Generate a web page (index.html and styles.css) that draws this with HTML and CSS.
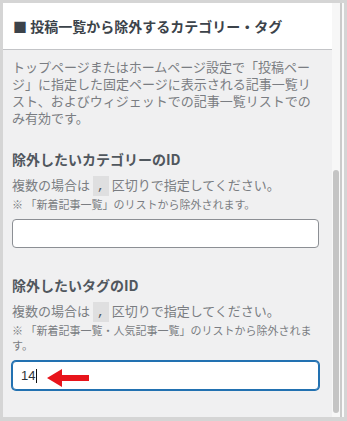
FILE: index.html
```html
<!DOCTYPE html>
<html lang="ja">
<head>
  <meta charset="UTF-8" />
  <meta name="viewport" content="width=device-width, initial-scale=1.0"/>
  <title>投稿一覧から除外するカテゴリー・タグ</title>
  <link rel="stylesheet" href="styles.css">
</head>
<body>
  <div class="frame">
    <div class="panel">
      <div class="panel-head">
        <h3>■ 投稿一覧から除外するカテゴリー・タグ</h3>
      </div>

      <div class="panel-body">
        <p class="intro">トップページまたはホームページ設定で「投稿ページ」に指定した固定ページに表示される記事一覧リスト、およびウィジェットでの記事一覧リストでのみ有効です。</p>

        <div class="field">
          <label class="label" for="ex-cat">除外したいカテゴリーのID</label>
          <p class="desc">複数の場合は <code>,</code> 区切りで指定してください。</p>
          <p class="note">※ 「新着記事一覧」のリストから除外されます。</p>
          <input type="text" id="ex-cat" class="input">
        </div>

        <div class="field">
          <label class="label">除外したいタグのID</label>
          <p class="desc">複数の場合は <code>,</code> 区切りで指定してください。</p>
          <p class="note">※ 「新着記事一覧・人気記事一覧」のリストから除外されます。</p>
          <div class="input is-focus">
            <span class="value">14</span><span class="caret"></span>
            <!-- annotation arrow -->
            <svg class="arrow" width="42" height="18" viewBox="0 0 42 18">
              <path d="M0 9 L15 0 L15 6 L42 6 L42 12 L15 12 L15 18 Z" fill="#e8141b"/>
            </svg>
          </div>
        </div>

        <div class="rule"></div>
      </div>
    </div>

    <div class="scrollbar"><div class="thumb"></div></div>
    <div class="edge"></div>
  </div>
</body>
</html>
```

FILE: styles.css
```css
* {
  box-sizing: border-box;
}

body {
  margin: 0;
  background: #d5d5d5;
  font-family: "Noto Sans CJK JP", "Noto Sans", sans-serif;
}

.frame {
  display: flex;
  height: 421px;
  padding: 3px 3px 4px 3px;
}

.panel {
  width: 329px;
  background: #f0f0f1;
  display: flex;
  flex-direction: column;
  overflow: hidden;
}

.panel-head {
  height: 47px;
  flex: none;
  background: #fff;
  border-bottom: 1px solid #c3c4c7;
  display: flex;
  align-items: center;
  padding-left: 10px;
}

.panel-head h3 {
  margin: 0;
  font-size: 14px;
  font-weight: 700;
  color: #3c434a;
}

.panel-body {
  padding: 8px 13px 0 9px;
}

.intro {
  margin: 0;
  font-size: 13px;
  line-height: 17px;
  color: #7a7d82;
}

.field {
  margin-top: 23px;
}

.field + .field {
  margin-top: 27px;
}

.label {
  display: block;
  font-size: 14px;
  font-weight: 700;
  line-height: 20px;
  color: #50575e;
}

.desc {
  margin: 6px 0 0;
  font-size: 13px;
  line-height: 20px;
  color: #7a7d82;
}

.desc code {
  font-family: "Liberation Mono", monospace;
  font-size: 13px;
  padding: 3px 4px 2px;
  background: rgba(0, 0, 0, 0.07);
  color: #50575e;
}

.note {
  margin: 0;
  font-size: 11px;
  line-height: 15px;
  color: #7a7d82;
}

.input {
  display: block;
  width: 100%;
  height: 29px;
  margin-top: 7px;
  padding: 0 8px;
  background: #fff;
  border: 1px solid #8c8f94;
  border-radius: 4px;
  font-family: "Liberation Sans", sans-serif;
  font-size: 13px;
  color: #2c3338;
}

.input.is-focus {
  position: relative;
  display: flex;
  align-items: center;
  margin-top: 8px;
  border-color: #2271b1;
  box-shadow: 0 0 0 1px #2271b1;
}

.caret {
  width: 1px;
  height: 14px;
  margin-left: 1px;
  background: #111;
}

.arrow {
  position: absolute;
  left: 34px;
  top: 50%;
  transform: translateY(-7px);
}

.rule {
  width: 295px;
  height: 1px;
  margin-top: 29px;
  background: #dcdcde;
}

.scrollbar {
  width: 8px;
  padding: 167px 1px 4px;
  background: #f7f7f7;
}

.thumb {
  height: 243px;
  background: #c4c4c4;
  border-radius: 3px;
}

.edge {
  width: 4px;
  background: #cbcbcb;
  border-right: 2px solid #fafafa;
}
```
